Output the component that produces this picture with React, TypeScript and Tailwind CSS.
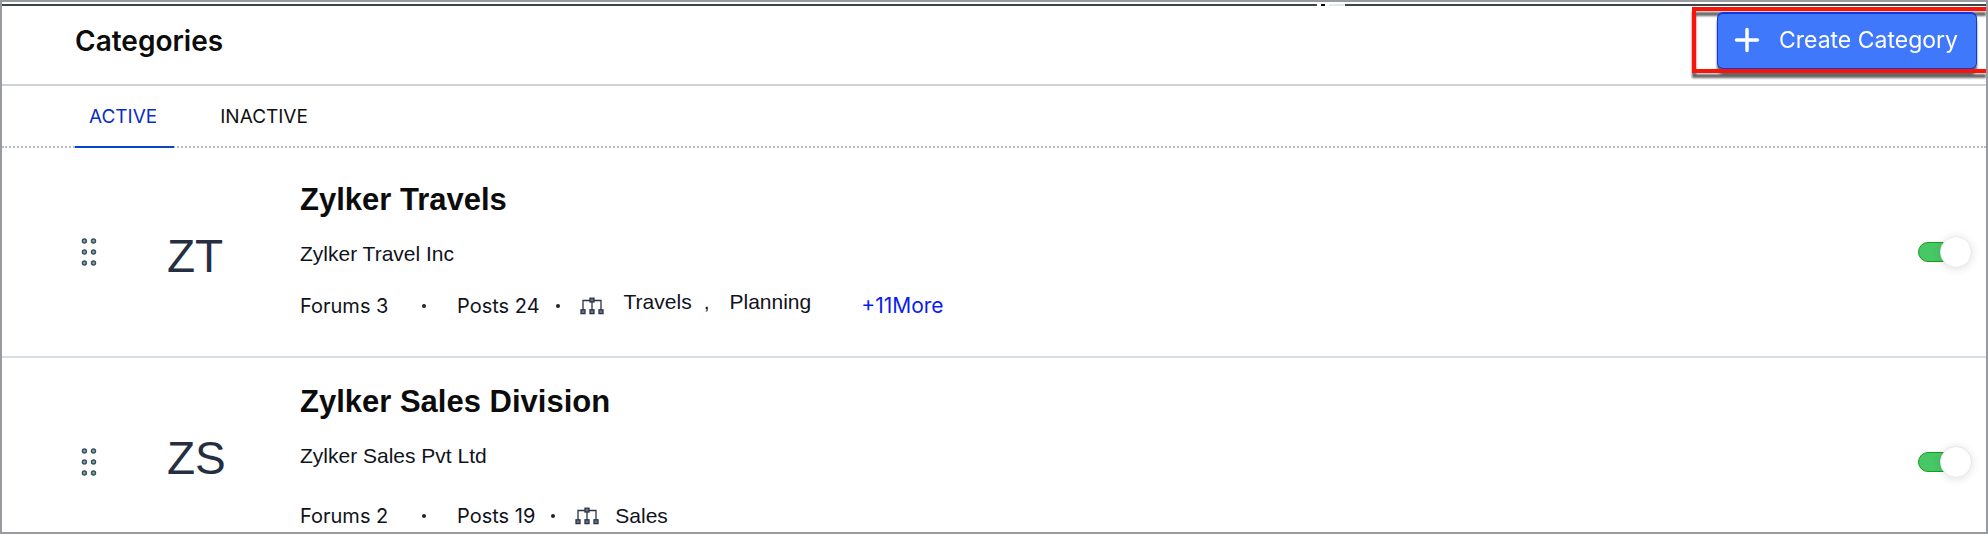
import { Plus } from 'lucide-react'

interface Category {
  id: string
  initials: string
  name: string
  description: string
  forums: number
  posts: number
  tags: string[]
  more?: number
}

const categories: Category[] = [
  {
    id: 'travels',
    initials: 'ZT',
    name: 'Zylker Travels',
    description: 'Zylker Travel Inc',
    forums: 3,
    posts: 24,
    tags: ['Travels', 'Planning'],
    more: 11,
  },
  {
    id: 'sales',
    initials: 'ZS',
    name: 'Zylker Sales Division',
    description: 'Zylker Sales Pvt Ltd',
    forums: 2,
    posts: 19,
    tags: ['Sales'],
  },
]

function DragHandle() {
  return (
    <svg width="18" height="30" viewBox="0 0 18 30" fill="#8fa3ab" stroke="#34505a" strokeWidth="1.4">
      {[4, 15, 26].map((y) => (
        <g key={y}>
          <circle cx="4.4" cy={y} r="2" />
          <circle cx="13.5" cy={y} r="2" />
        </g>
      ))}
    </svg>
  )
}

function OrgIcon() {
  return (
    <svg width="24" height="18" viewBox="0 0 24 18" fill="none" stroke="#2b3345" strokeWidth="1.3" className="shrink-0">
      <path d="M3 13V3.5h18V13M12 5v8" />
      <g fill="#66758c">
        <rect x="10" y="1.2" width="4" height="3.8" />
        <rect x="1" y="12.8" width="4" height="3.8" />
        <rect x="10" y="12.8" width="4" height="3.8" />
        <rect x="19" y="12.8" width="4" height="3.8" />
      </g>
    </svg>
  )
}

function Dot() {
  return <span className="size-1 shrink-0 rounded-full bg-[#222]" />
}

function Toggle({ label }: { label: string }) {
  return (
    <input
      type="checkbox"
      role="switch"
      aria-label={label}
      defaultChecked
      className="relative mt-[94px] h-5 w-12 shrink-0 cursor-pointer appearance-none rounded-full border border-gray-400 bg-gray-300 before:absolute before:-top-[7px] before:left-0 before:size-8 before:rounded-full before:border before:border-[#e6e8eb] before:bg-white before:shadow-[0_1px_10px_rgba(0,0,0,0.12)] checked:border-[#14a014] checked:bg-[#48c766] checked:before:left-[21px]"
    />
  )
}

function CategoryRow({ category }: { category: Category }) {
  const { initials, name, description, forums, posts, tags, more } = category
  const hasMore = more !== undefined

  return (
    <li className="flex items-start border-b-2 border-[#d5dee6] pr-5 pl-[78px] last:border-b-0">
      <button aria-label={`Reorder ${name}`} className="mt-[89px] w-[18px] shrink-0 cursor-grab">
        <DragHandle />
      </button>

      <div className={`w-[134px] shrink-0 pl-[69px] text-[46px] leading-[56px] text-[#262f42] ${hasMore ? 'pt-20' : 'pt-[72px]'}`}>
        {initials}
      </div>

      <div className={`min-w-0 flex-1 pl-[68px] text-[#10131c] ${hasMore ? 'pt-8 pb-[34px]' : 'pt-6'}`}>
        <h2 className="text-[31px] leading-10 font-bold text-[#0c0c0c]">{name}</h2>
        <p className="mt-[18px] text-[21px] leading-8">{description}</p>
        <div className={`flex h-8 items-center text-[21px] leading-8 ${hasMore ? 'mt-5' : 'mt-7'}`}>
          <span className="w-[122px] font-[Inter,sans-serif] text-xl">Forums {forums}</span>
          <Dot />
          <span className="ml-[31px] font-[Inter,sans-serif] text-xl">Posts {posts}</span>
          <span className="mr-5 ml-4 flex">
            <Dot />
          </span>
          <OrgIcon />
          <span className={hasMore ? 'ml-5 flex pb-2' : 'ml-4 flex'}>
            {tags.map((tag, i) => (
              <span key={tag}>
                {i > 0 && <span className="mr-5 ml-3">,</span>}
                {tag}
              </span>
            ))}
          </span>
          {hasMore && (
            <a href="#more" className="ml-[50px] font-[Inter,sans-serif] text-[#0b1cf0]">
              +{more}More
            </a>
          )}
        </div>
      </div>

      <Toggle label={`${name} active`} />
    </li>
  )
}

export default function App() {
  return (
    <main className="overflow-hidden border-2 border-[#979b9f] bg-white font-['Liberation_Sans',Arial,sans-serif]">
      {/* Bottom edge of the bar above the page */}
      <div className="mt-0.5 flex h-0.5">
        <div className="flex-[41] bg-[#3c4648]" />
        <div className="mx-1 w-1 bg-black" />
        <div className="w-4 bg-gray-200" />
        <div className="flex-[20] bg-[#3c4648]" />
      </div>

      <header className="flex h-20 items-start justify-between border-b-2 border-[#cfd2d5] pl-[73px]">
        <h1 className="mt-[17px] font-[Inter,sans-serif] text-[28px] leading-9 font-semibold text-[#0c0c0c]">Categories</h1>
        <div className="mt-px border-y-4 border-l-4 border-[#f91407] pt-px pr-[9px] pl-[21px] drop-shadow-[0_5px_1px_rgba(0,0,0,0.6)]">
          <button className="flex h-[57px] items-center rounded-md border border-t-2 border-[#1238dc] bg-[#3f78fb] pr-[18px] pb-[2px] pl-[11px] font-[Inter,sans-serif] text-[23px] text-white">
            <Plus size={36} strokeWidth={2.3} className="mr-[14px]" />
            Create Category
          </button>
        </div>
      </header>

      <nav className="flex border-b-2 border-dotted border-[#b8bcbe] pl-[73px] font-[Inter,sans-serif] text-[19px] leading-8">
        <a href="#active" className="-mb-0.5 border-b-2 border-[#0a45c4] pt-[15px] pr-[17px] pb-[13px] pl-[14px] text-[#0a2fc4]">
          ACTIVE
        </a>
        <a href="#inactive" className="ml-8 px-[14px] pt-[15px] pb-[13px] text-[#111]">
          INACTIVE
        </a>
      </nav>

      <ul>
        {categories.map((category) => (
          <CategoryRow key={category.id} category={category} />
        ))}
      </ul>
    </main>
  )
}
